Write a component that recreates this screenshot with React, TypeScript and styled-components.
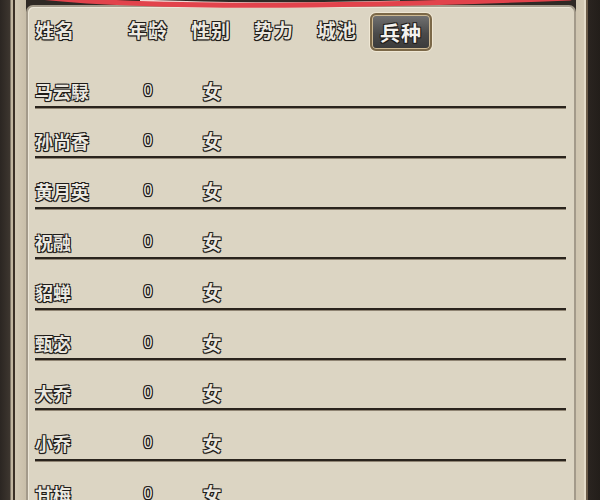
import React from 'react';
import styled, { createGlobalStyle, css } from 'styled-components';

const GlobalStyle = createGlobalStyle`
  html, body {
    margin: 0;
    padding: 0;
    overflow: hidden;
    background: #2f2925;
  }
`;

const outlined = css`
  color: #ebe8e0;
  font-family: "Noto Sans CJK SC", "Noto Sans", sans-serif;
  font-weight: 700;
  text-shadow:
    -1px -1px 0 #1f1c19,
    1px -1px 0 #1f1c19,
    -1px 1px 0 #1f1c19,
    1px 1px 0 #1f1c19,
    0 1px 1px #1f1c19;
`;

const headers = ['姓名', '年龄', '性别', '势力', '城池'];
const heroes = ['马云騄', '孙尚香', '黄月英', '祝融', '貂蝉', '甄宓', '大乔', '小乔', '甘梅'];

const Screen = styled.div`
  position: relative;
  width: 600px;
  height: 500px;
  display: flex;
  overflow: hidden;
`;

const LeftFrame = styled.div`
  width: 26px;
  flex-shrink: 0;
  background: linear-gradient(
    to right,
    #2b2622 0,
    #3d362f 10px,
    #c2b6a0 11px,
    #c2b6a0 13px,
    #3b3026 13px,
    #3b3026 15px,
    #d4cab6 15px,
    #c8bea9 26px
  );
`;

const RightFrame = styled.div`
  width: 24px;
  flex-shrink: 0;
  background: linear-gradient(
    to right,
    #cfc5b0 0,
    #d3c9b4 8px,
    #e4dbc9 8px,
    #e4dbc9 10px,
    #6a5a48 10px,
    #6a5a48 12px,
    #2a2420 12px,
    #231e1a 24px
  );
`;

const Panel = styled.div`
  flex: 1;
  margin-top: 5px;
  border: 2px solid #a39a8a;
  border-bottom: none;
  border-radius: 7px 7px 0 0;
  background: #dcd5c3;
  box-shadow: inset 1px 1px 0 #ece6d8;
  display: flex;
  flex-direction: column;
  overflow: hidden;
`;

const Header = styled.div`
  height: 50.6px;
  flex-shrink: 0;
  display: grid;
  grid-template-columns: 93px 63px 63px 63px 53px auto;
  align-items: center;
  padding: 0 0 4px 7px;
  box-sizing: border-box;
`;

const HeaderCell = styled.span`
  ${outlined};
  font-size: 19px;
  line-height: 24px;
  letter-spacing: 1px;
`;

const TabButton = styled.div<{ $active?: boolean }>`
  ${outlined};
  width: 62px;
  height: 38px;
  margin-top: 4px;
  box-sizing: border-box;
  display: flex;
  align-items: center;
  justify-content: center;
  font-size: 20px;
  letter-spacing: 1px;
  border: 2px solid #7b6848;
  border-radius: 6px;
  box-shadow: inset 0 0 0 1px #cdb993, 0 0 0 1px #efe7d4;
  background: linear-gradient(#727272, #4a4a4a 55%, #3a3a3a);
  color: #f4f2ee;
`;

const List = styled.div`
  display: flex;
  flex-direction: column;
  margin: 0 8px 0 7px;
`;

const Row = styled.div`
  height: 50.4px;
  flex-shrink: 0;
  box-sizing: border-box;
  display: grid;
  grid-template-columns: 66px 34px 34px;
  column-gap: 30px;
  align-items: start;
  padding-top: 22px;
  border-bottom: 2px solid #2a241d;
  box-shadow: 0 1px 0 #8f8473;
`;

const Name = styled.span`
  ${outlined};
  font-size: 18px;
  line-height: 22px;
  white-space: nowrap;
`;

const Cell = styled.span<{ $num?: boolean }>`
  ${outlined};
  text-align: center;
  font-size: ${(p) => (p.$num ? '16px' : '19px')};
  line-height: 22px;
  ${(p) =>
    p.$num &&
    css`
      font-family: "Liberation Sans", sans-serif;
      font-weight: 400;
    `}
`;

const Scribble = styled.svg`
  position: absolute;
  top: 0;
  left: 0;
  pointer-events: none;
`;

export default function App() {
  return (
    <>
      <GlobalStyle />
      <Screen>
        <LeftFrame />
        <Panel>
          <Header>
            {headers.map((h) => (
              <HeaderCell key={h}>{h}</HeaderCell>
            ))}
            <TabButton $active>兵种</TabButton>
          </Header>
          <List>
            {heroes.map((name) => (
              <Row key={name}>
                <Name>{name}</Name>
                <Cell $num>0</Cell>
                <Cell>女</Cell>
              </Row>
            ))}
          </List>
        </Panel>
        <RightFrame />
        <Scribble width="600" height="20" viewBox="0 0 600 20">
          <path d="M 140 1 Q 260 6 400 2" stroke="#f1d6d4" strokeWidth="3" fill="none" />
          <path
            d="M 40 -3 Q 190 13 570 -2"
            stroke="#e2434c"
            strokeWidth="5"
            fill="none"
            strokeLinecap="round"
          />
        </Scribble>
      </Screen>
    </>
  );
}
